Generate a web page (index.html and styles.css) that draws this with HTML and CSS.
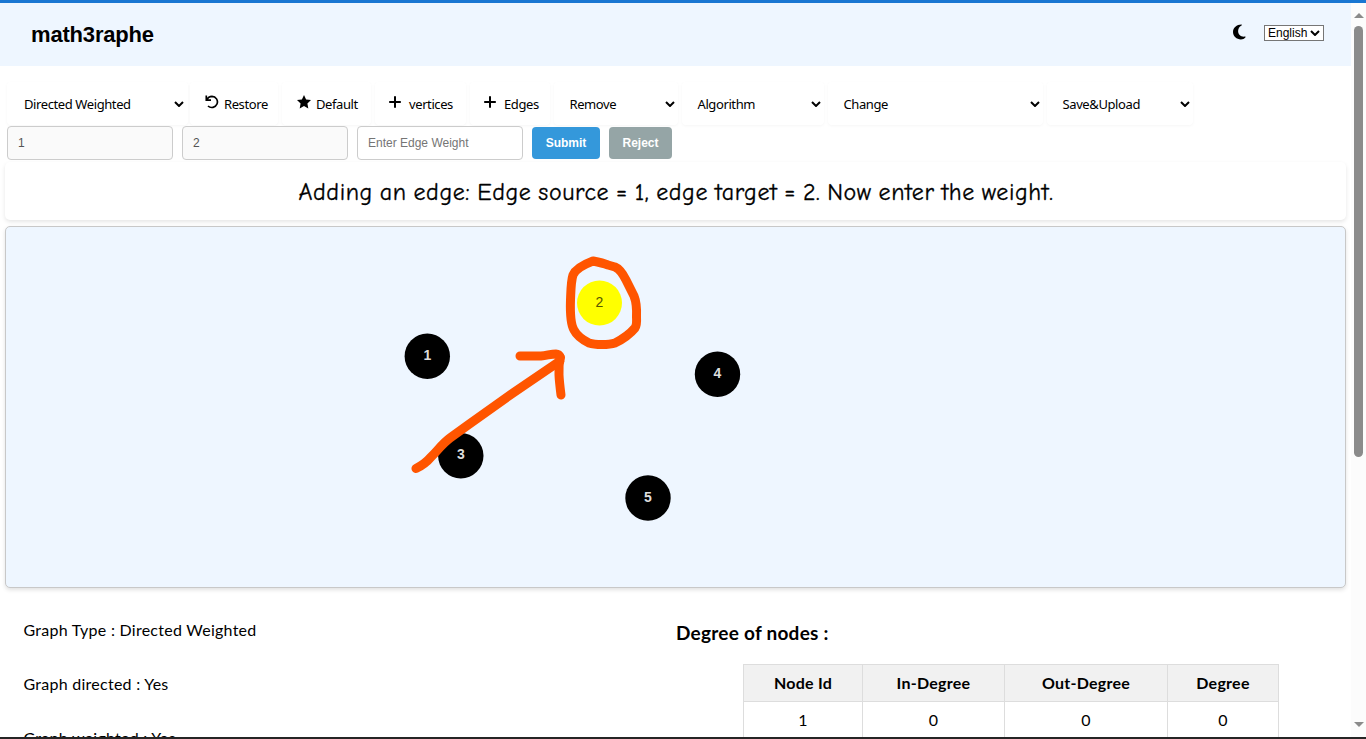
FILE: index.html
```html
<!DOCTYPE html>
<html lang="en">
<head>
<meta charset="utf-8">
<title>math3raphe</title>
<link rel="stylesheet" href="styles.css">
</head>
<body>
<div class="window">
  <div class="page">
    <header class="header">
      <div class="brand">math3raphe</div>
      <div class="header-tools">
        <svg class="moon" viewBox="0 0 14 16"><path d="M9 0C4 0 0 3.500 0 8c0 4.500 4 8 8.500 8 2 0 3.700-.7 5-2.400.2-.4 0-.8-.5-.7C8.500 13.500 5.500 10.800 5.500 7c0-2.500 1.300-4.700 3.700-6 .5-.3.300-1-.2-1z"/></svg>
        <div class="language">English<svg class="chevron" viewBox="0 0 10 6"><path d="M1 1l4 4 4-4"/></svg></div>
      </div>
    </header>
    <nav class="toolbar">
      <div class="tool w-type"><span>Directed Weighted</span><svg class="chevron" viewBox="0 0 10 6"><path d="M1 1l4 4 4-4"/></svg></div>
      <div class="tool button w-restore"><svg class="icon" viewBox="0 0 14 14"><path class="line thin" d="M1.300 .5v4.700h4.700M1.700 5C3 2.300 5 1.300 7 1.300a5.600 5.600 0 1 1-4 9.700"/></svg><span>Restore</span></div>
      <div class="tool button w-default"><svg class="icon" viewBox="0 0 14 14"><path d="M7 0l2.100 4.500 4.900.6-3.600 3.400.9 5L7 11.100l-4.300 2.400.9-5L0 5.100l4.900-.6z"/></svg><span>Default</span></div>
      <div class="tool button w-vertices"><svg class="icon plus" viewBox="0 0 14 14"><path class="line" d="M7 1.200v11.600M1.200 7h11.600"/></svg><span>vertices</span></div>
      <div class="tool button w-edges"><svg class="icon plus" viewBox="0 0 14 14"><path class="line" d="M7 1.200v11.600M1.200 7h11.600"/></svg><span>Edges</span></div>
      <div class="tool w-remove"><span>Remove</span><svg class="chevron" viewBox="0 0 10 6"><path d="M1 1l4 4 4-4"/></svg></div>
      <div class="tool w-algorithm"><span>Algorithm</span><svg class="chevron" viewBox="0 0 10 6"><path d="M1 1l4 4 4-4"/></svg></div>
      <div class="tool w-change"><span>Change</span><svg class="chevron" viewBox="0 0 10 6"><path d="M1 1l4 4 4-4"/></svg></div>
      <div class="tool w-save"><span>Save&amp;Upload</span><svg class="chevron" viewBox="0 0 10 6"><path d="M1 1l4 4 4-4"/></svg></div>
    </nav>
    <div class="edge-form">
      <div class="field disabled">1</div>
      <div class="field disabled">2</div>
      <div class="field placeholder">Enter Edge Weight</div>
      <div class="action submit">Submit</div>
      <div class="action reject">Reject</div>
    </div>
    <div class="message"><span>Adding an edge: Edge source = 1, edge target = 2. Now enter the weight.</span></div>
    <svg class="graph" viewBox="6 227 1339 360">
      <g class="nodes">
        <circle cx="427.300" cy="356.300" r="22.700"/>
        <circle class="selected" cx="599.500" cy="303" r="22.500"/>
        <circle cx="460.800" cy="455.700" r="22.700"/>
        <circle cx="717.500" cy="374.300" r="22.700"/>
        <circle cx="648" cy="498" r="22.700"/>
      </g>
      <g class="labels">
        <text x="427.300" y="360">1</text>
        <text class="selected-label" x="599.300" y="307">2</text>
        <text x="460.800" y="459">3</text>
        <text x="717.300" y="378">4</text>
        <text x="648" y="501.500">5</text>
      </g>
      <g class="pen">
        <path d="M416 468.500C421 466 426 463 431 457C437 451 443 443 450 438L468 425L513 393L560 361"/>
        <path d="M520 356L541 356C547 355.500 551 354 556 354Q559 354 560.500 357.500"/>
        <path d="M560 357C558 370 559 379 561 395"/>
        <path d="M593 261C585 264 576 268 573 275C571 281 571 288 570.500 300C570 315 571 325 574 330C577 336 583 340 589 343C595 345 609 345 615 343C621 340 630 334 635 328Q637 325 636.500 317C637 306 636 301 634 296L626 280C623 274 620 269 615 267L608 265C603 263 598 262 593 261Z"/>
      </g>
    </svg>
    <main class="details">
      <div class="facts">
        <p>Graph Type : Directed Weighted</p>
        <p>Graph directed : Yes</p>
        <p>Graph weighted : Yes</p>
      </div>
      <section class="degrees">
        <h2>Degree of nodes :</h2>
        <table>
          <colgroup><col class="c1"><col class="c2"><col class="c3"><col class="c4"></colgroup>
          <thead><tr><th>Node Id</th><th>In-Degree</th><th>Out-Degree</th><th>Degree</th></tr></thead>
          <tbody><tr><td>1</td><td>0</td><td>0</td><td>0</td></tr></tbody>
        </table>
      </section>
    </main>
  </div>
  <div class="scrollbar">
    <svg class="arrow" viewBox="0 0 10 5"><path d="M5 0l5 5H0z"/></svg>
    <div class="thumb"></div>
    <svg class="arrow down" viewBox="0 0 10 5"><path d="M0 0h10L5 5z"/></svg>
  </div>
</div>
</body>
</html>
```

FILE: styles.css
```css
* { box-sizing: border-box; }
html, body { margin: 0; height: 739px; overflow: hidden; background: #fff; }
body { color: #000; font-family: "Liberation Sans", Arial, sans-serif; }
.window { display: flex; height: 739px; border-top: 3px solid #1976d2; border-bottom: 2px solid #252525; }
.page { width: 1351px; height: 734px; overflow: hidden; flex: none; }

.header { height: 63px; background: #eef6ff; display: flex; justify-content: space-between; align-items: center; padding: 0 27px 0 31px; }
.brand { font-size: 22px; font-weight: 700; letter-spacing: -.18px; }
.header-tools { display: flex; gap: 18px; align-items: center; padding-bottom: 3px; }
.moon { width: 13px; height: 16px; margin-bottom: 2px; }
.language { width: 60px; height: 16px; border: 1px solid #767676; background: #fff; font-size: 12px; line-height: 14px; padding: 0 3px; display: flex; justify-content: space-between; align-items: center; }
.chevron { width: 10px; height: 6px; fill: none; stroke: #000; stroke-width: 2; flex: none; }

.toolbar { display: flex; padding: 16px 0 0 7px; gap: 4px; height: 59px; }
.tool { height: 43px; border-radius: 4px; box-shadow: 0 1px 3px rgba(0,0,0,.04); background: #fff; font-family: "Noto Sans", sans-serif; font-size: 13px; letter-spacing: -.4px; display: flex; justify-content: space-between; align-items: center; padding: 1px 3px 0 15.500px; white-space: nowrap; }
.tool.button { justify-content: flex-start; padding: 1px 0 0 15px; }
.icon { width: 14px; height: 14px; flex: none; margin: 0 5px 4px 0; }
.plus { margin-right: 7px; }
.line { fill: none; stroke: #000; stroke-width: 2; }
.thin { stroke-width: 1.7; }
.tool.w-type { width: 181px; padding-left: 17px; padding-right: 4px; }
.w-restore { width: 88px; margin-left: -2px; }
.w-default { width: 89px; }
.w-vertices { width: 91px; }
.w-edges { width: 80px; }
.button.w-vertices, .button.w-edges { padding-left: 13px; }
.w-remove { width: 124px; }
.w-algorithm { width: 142px; }
.w-change { width: 215px; }
.w-save { width: 146px; }

.edge-form { display: flex; padding: 1px 0 0 7px; gap: 9px; height: 37px; }
.field { width: 166px; height: 34px; border: 1px solid #ccc; border-radius: 4px; padding: 0 10px; font-size: 12px; line-height: 32px; color: #757575; }
.disabled { background: #fafafa; color: #545454; }
.action { height: 32px; margin-top: 1px; border-radius: 4px; color: #fff; font-size: 12px; font-weight: 700; line-height: 32px; text-align: center; }
.submit { width: 68px; background: #3498db; }
.reject { width: 63px; background: #95a5a6; }

.message { margin: 0 5px 6px; height: 58px; border-radius: 5px; box-shadow: 0 2px 4px rgba(0,0,0,.1); text-align: center; font-family: "Comic Sans MS", "Comic Neue", "Open Sans", sans-serif; font-size: 24px; letter-spacing: .6px; word-spacing: -1.750px; -webkit-text-stroke: .3px #000; line-height: 60px; white-space: nowrap; padding-left: 1px; }
.graph { display: block; margin-left: 5px; width: 1341px; height: 362px; border: 1px solid #c8c8c8; border-radius: 5px; background: #eef6ff; box-shadow: 0 2px 4px rgba(0,0,0,.12); }
.selected { fill: #ff0; }
.labels { font: 700 14px "Liberation Sans", Arial, sans-serif; text-anchor: middle; fill: #ddd; }
.selected-label { fill: #555500; font-weight: 400; }
.pen { fill: none; stroke: #ff5500; stroke-width: 9; stroke-linecap: round; stroke-linejoin: round; }

.details { display: flex; font-family: Lato, sans-serif; font-size: 16px; letter-spacing: .26px; }
.facts { width: 671px; padding: 32px 0 0 23.500px; flex: none; }
.facts p { margin: 0 0 34px; line-height: 20px; white-space: nowrap; width: max-content; }
.degrees { flex: none; width: 675px; padding: 33px 0 0 5px; }
.degrees h2 { margin: 0 0 20px; font-size: 19px; line-height: 23px; letter-spacing: .25px; }
.degrees table { border-collapse: collapse; table-layout: fixed; width: 536px; margin-left: 67px; }
.c1 { width: 119px; } .c2 { width: 142px; } .c3 { width: 163px; } .c4 { width: 111px; }
th, td { border: 1px solid #ddd; height: 37px; padding: 0; text-align: center; line-height: 20px; }
th { background: #f1f1f1; }

.scrollbar { width: 15px; background: #fcfcfc; display: flex; flex-direction: column; align-items: center; padding: 10px 0; }
.arrow { width: 10px; height: 5px; fill: #8b8b8b; flex: none; }
.down { margin-top: auto; }
.thumb { width: 9px; height: 431px; border-radius: 5px; background: #8b8b8b; margin-top: 8px; flex: none; }
```
